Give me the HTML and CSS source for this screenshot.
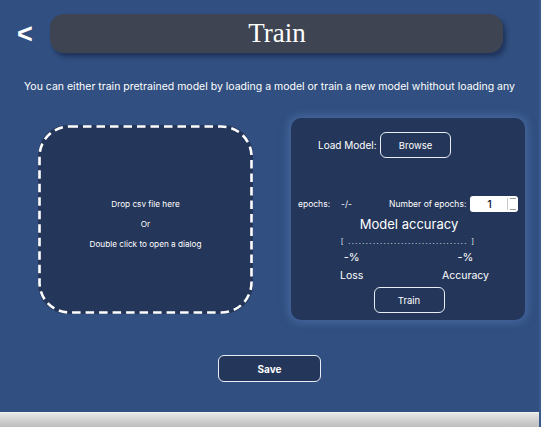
FILE: index.html
```html
<!DOCTYPE html>
<html>
<head>
<meta charset="utf-8">
<link rel="stylesheet" href="styles.css">
</head>
<body>
<div class="page">
  <header class="top">
    <span class="back">&lt;</span>
    <div class="titlebar"><h1>Train</h1></div>
  </header>
  <p class="intro">You can either train pretrained model by loading a model or train a new model whithout loading any</p>
  <main class="main">
    <div class="drop">
      <svg class="dash" width="215" height="189" viewBox="0 0 215 189" aria-hidden="true">
        <rect x="1.5" y="1.5" width="212" height="186" rx="30" ry="30" fill="none" stroke="#ffffff" stroke-width="2.6" stroke-dasharray="8.5 5"/>
      </svg>
      <p>Drop csv file here</p>
      <p>Or</p>
      <p>Double click to open a dialog</p>
    </div>
    <section class="panel">
      <div class="load">
        <span class="load-label">Load Model:</span>
        <button class="btn browse">Browse</button>
      </div>
      <div class="epochs">
        <span class="ep-label">epochs:</span>
        <span class="ep-val">-/-</span>
        <span class="num-label">Number of epochs:</span>
        <div class="num">
          <span class="num-val">1</span>
          <span class="spin"><i></i><i></i></span>
        </div>
      </div>
      <div class="acc-title">Model accuracy</div>
      <div class="bar">[ .................................. ]</div>
      <div class="stats">
        <div class="stat"><span class="pct">-%</span><span class="lbl">Loss</span></div>
        <div class="stat"><span class="pct">-%</span><span class="lbl">Accuracy</span></div>
      </div>
      <button class="btn train">Train</button>
    </section>
  </main>
  <div class="save-row"><button class="btn save">Save</button></div>
</div>
<div class="footer"></div>
</body>
</html>
```

FILE: styles.css
```css
html, body {
  margin: 0;
  padding: 0;
}
body {
  width: 541px;
  height: 427px;
  background: #314f80;
  font-family: Inter, "Liberation Sans", sans-serif;
  color: #ffffff;
  overflow: hidden;
  display: flex;
  flex-direction: column;
  box-sizing: border-box;
  border-right: 2px solid #3b5a8c;
}
.page {
  flex: 1;
  display: flex;
  flex-direction: column;
}
.top {
  display: flex;
  align-items: center;
  height: 39px;
  padding: 14px 0 0 17px;
}
.back {
  font-family: "Liberation Sans", sans-serif;
  font-weight: bold;
  font-size: 27px;
  width: 33px;
  line-height: 37px;
  padding-top: 2px;
}
.titlebar {
  width: 453px;
  height: 39px;
  background: #3e4452;
  border-radius: 14px;
  box-shadow: 3px 4px 4px rgba(20, 35, 70, 0.6);
  display: flex;
  align-items: center;
  justify-content: center;
}
.titlebar h1 {
  margin: 0;
  font-family: "Liberation Serif", serif;
  font-weight: normal;
  font-size: 27px;
  line-height: 1;
  padding-left: 1px;
}
.intro {
  margin: 27px 0 0;
  text-align: center;
  font-size: 10.5px;
  line-height: 14px;
}
.main {
  display: flex;
  align-items: center;
  height: 214px;
  margin-top: 18px;
  padding-left: 38px;
}
.drop {
  position: relative;
  width: 215px;
  height: 189px;
  box-sizing: border-box;
  border-radius: 30px;
  background: #243659;
  display: flex;
  flex-direction: column;
  align-items: center;
  justify-content: center;
  gap: 10px;
  font-size: 8.2px;
  padding-top: 10px;
}
.dash {
  position: absolute;
  left: 0;
  top: 0;
}
.drop p {
  margin: 0;
  line-height: 10px;
}
.panel {
  margin-left: 38px;
  width: 234px;
  height: 202px;
  box-sizing: border-box;
  background: #243659;
  border-radius: 10px;
  box-shadow: 0 0 8px 3px rgba(90, 130, 190, 0.45);
  display: flex;
  flex-direction: column;
  padding: 14px 7px 0;
}
.load {
  display: flex;
  align-items: center;
  padding-left: 20px;
  font-size: 10px;
}
.load-label { width: 62px; }
.btn {
  font-family: inherit;
  color: #ffffff;
  background: #243659;
  border: 1.5px solid #e8ecf4;
  border-radius: 6px;
  padding: 0;
  cursor: pointer;
}
.browse {
  width: 71px;
  height: 26px;
  font-size: 9.5px;
}
.epochs {
  display: flex;
  align-items: center;
  margin-top: 38px;
  font-size: 8.5px;
}
.ep-label { width: 43px; }
.ep-val { width: 48px; }
.num-label { width: 81px; }
.num {
  width: 48px;
  height: 16px;
  background: #ffffff;
  border-radius: 3px;
  color: #1a2540;
  display: flex;
  align-items: center;
}
.num-val {
  flex: 1;
  text-align: center;
  font-size: 11px;
  font-weight: 500;
  padding-left: 2px;
}
.spin {
  width: 8px;
  height: 12px;
  display: flex;
  flex-direction: column;
  justify-content: space-between;
  margin-right: 2px;
  border-left: 1px solid #c8c8c8;
}
.spin i {
  display: block;
  height: 1px;
  background: #999;
  margin-left: 2px;
}
.acc-title {
  text-align: center;
  font-size: 13px;
  margin-top: 4px;
  padding-left: 2px;
}
.bar {
  text-align: center;
  font-size: 7.5px;
  letter-spacing: 1.35px;
  margin-top: 5px;
  color: #dfe5ef;
}
.stats {
  display: flex;
  justify-content: space-between;
  padding: 0 29px 0 42px;
  margin-top: 4px;
}
.stat {
  display: flex;
  flex-direction: column;
  align-items: center;
  gap: 5px;
  font-size: 10.5px;
}
.pct { font-size: 11px; }
.train {
  align-self: center;
  width: 71px;
  height: 26px;
  font-size: 9.5px;
  margin-top: 5px;
  margin-left: 2px;
}
.save-row {
  display: flex;
  justify-content: center;
  margin-top: 29px;
}
.save {
  width: 103px;
  height: 27px;
  font-size: 10px;
  font-weight: bold;
}
.footer {
  height: 14px;
  background: linear-gradient(#e6e6e6, #bdbdbd);
  border-top: 1px solid #f2f2f2;
}
```
